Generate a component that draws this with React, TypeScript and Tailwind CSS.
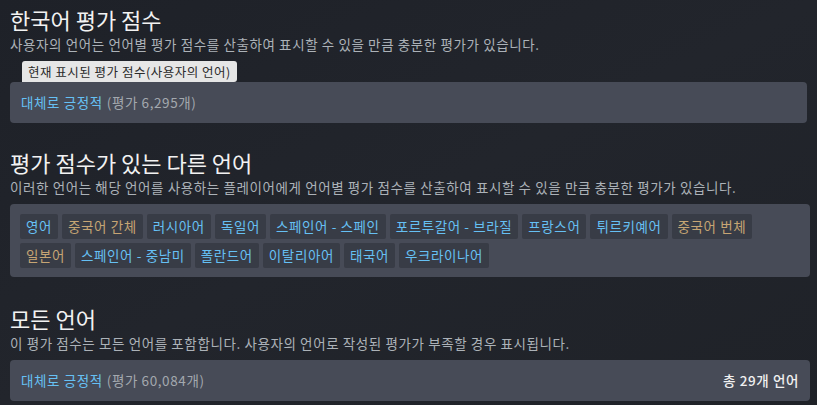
import React from 'react';

type Lang = { name: string; gold?: boolean };

const otherLangs: Lang[] = [
  { name: '영어' },
  { name: '중국어 간체', gold: true },
  { name: '러시아어' },
  { name: '독일어' },
  { name: '스페인어 - 스페인' },
  { name: '포르투갈어 - 브라질' },
  { name: '프랑스어' },
  { name: '튀르키예어' },
  { name: '중국어 번체', gold: true },
  { name: '일본어', gold: true },
  { name: '스페인어 - 중남미' },
  { name: '폴란드어' },
  { name: '이탈리아어' },
  { name: '태국어' },
  { name: '우크라이나어' },
];

const font = { fontFamily: '"Noto Sans CJK KR", "Liberation Sans", sans-serif' };

const SectionTitle: React.FC<{ children: React.ReactNode }> = ({ children }) => (
  <h2 className="text-[22px] leading-[28px] text-[#f2f2f2] font-normal">{children}</h2>
);

const SectionDesc: React.FC<{ children: React.ReactNode }> = ({ children }) => (
  <p className="text-[13.5px] tracking-[0.6px] leading-[18px] text-[#acb2b8] mt-[2px]">{children}</p>
);

const App: React.FC = () => {
  return (
    <div
      className="w-[817px] h-[405px] overflow-hidden bg-gradient-to-br from-[#1e2128] via-[#22252c] to-[#1f2228] px-[10px] pt-[5px]"
      style={font}
    >
      {/* 한국어 평가 점수 */}
      <SectionTitle>한국어 평가 점수</SectionTitle>
      <SectionDesc>사용자의 언어는 언어별 평가 점수를 산출하여 표시할 수 있을 만큼 충분한 평가가 있습니다.</SectionDesc>

      <div className="mt-[8px] ml-[12px] inline-block bg-[#e6e6e6] text-[#2a2a2a] text-[12.5px] tracking-[0.5px] leading-[21px] px-[6px] rounded-t-[3px] rounded-br-[3px]">
        현재 표시된 평가 점수(사용자의 언어)
      </div>
      <div className="h-[41px] bg-[#474b57] rounded-[4px] flex items-center px-[11px] text-[13.5px] tracking-[0.6px]">
        <span className="text-[#66c0f4]">대체로 긍정적</span>
        <span className="text-[#a3a8ae] ml-[4px]">(평가 6,295개)</span>
      </div>

      {/* 평가 점수가 있는 다른 언어 */}
      <div className="mt-[25px]">
        <SectionTitle>평가 점수가 있는 다른 언어</SectionTitle>
        <SectionDesc>이러한 언어는 해당 언어를 사용하는 플레이어에게 언어별 평가 점수를 산출하여 표시할 수 있을 만큼 충분한 평가가 있습니다.</SectionDesc>
      </div>
      <div className="mt-[8px] bg-[#474b57] rounded-[4px] pl-[10px] pr-[10px] pt-[10px] pb-[9px] flex flex-wrap gap-[4px] w-[800px]">
        {otherLangs.map((l) => (
          <span
            key={l.name}
            className={`h-[25px] leading-[25px] px-[6px] rounded-[2px] bg-[#383c46] text-[13.5px] tracking-[0.6px] ${
              l.gold ? 'text-[#c6a574]' : 'text-[#66c0f4]'
            }`}
          >
            {l.name}
          </span>
        ))}
      </div>

      {/* 모든 언어 */}
      <div className="mt-[27px]">
        <SectionTitle>모든 언어</SectionTitle>
        <SectionDesc>이 평가 점수는 모든 언어를 포함합니다. 사용자의 언어로 작성된 평가가 부족할 경우 표시됩니다.</SectionDesc>
      </div>
      <div className="mt-[8px] h-[41px] bg-[#474b57] rounded-[4px] flex items-center px-[11px] text-[13.5px] tracking-[0.6px] w-[800px]">
        <span className="text-[#66c0f4]">대체로 긍정적</span>
        <span className="text-[#a3a8ae] ml-[4px]">(평가 60,084개)</span>
        <span className="ml-auto text-[#f0f0f0] font-medium">총 29개 언어</span>
      </div>
    </div>
  );
};

export default App;
